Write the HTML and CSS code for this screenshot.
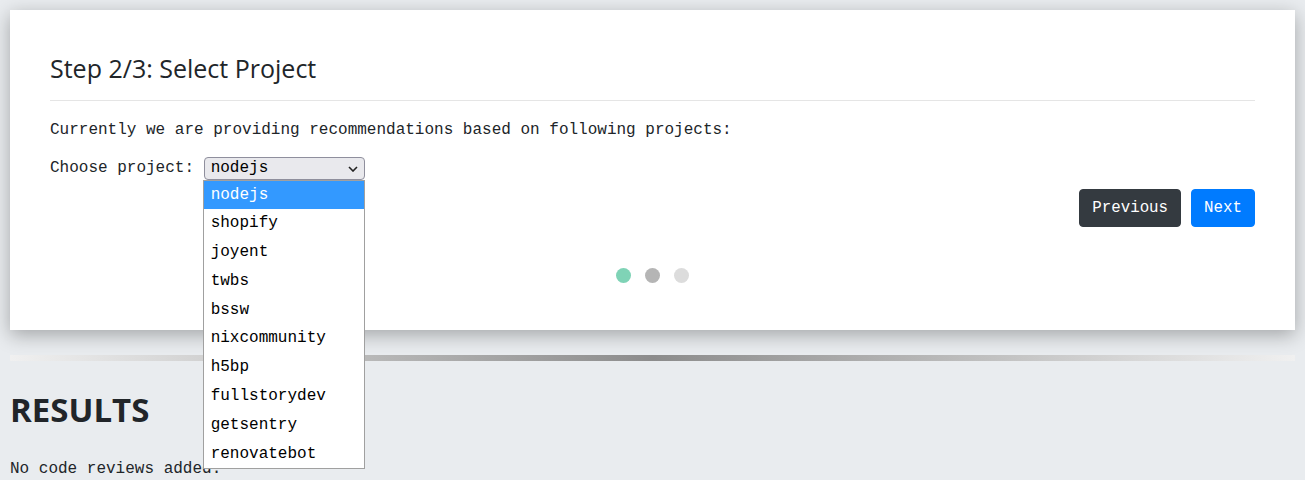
FILE: index.html
```html
<!DOCTYPE html>
<html>
<head>
<meta charset="utf-8">
<title>Select Project</title>
<link rel="stylesheet" href="styles.css">
</head>
<body>
<div class="card">
  <h4 class="card-title">Step 2/3: Select Project</h4>
  <hr class="divider">
  <p class="intro">Currently we are providing recommendations based on following projects:</p>
  <div class="choose-row">
    <label class="choose-label" for="project">Choose project: </label>
    <span class="select-wrap">
      <select id="project" class="project-select">
        <option>nodejs</option>
      </select>
      <svg class="chevron" width="10" height="6" viewBox="0 0 10 6"><path d="M1 1 L5 5 L9 1" fill="none" stroke="#222" stroke-width="1.6"/></svg>
      <ul class="dropdown">
        <li class="active">nodejs</li>
        <li>shopify</li>
        <li>joyent</li>
        <li>twbs</li>
        <li>bssw</li>
        <li>nixcommunity</li>
        <li>h5bp</li>
        <li>fullstorydev</li>
        <li>getsentry</li>
        <li>renovatebot</li>
      </ul>
    </span>
  </div>
  <div class="actions">
    <button class="btn btn-dark">Previous</button>
    <button class="btn btn-primary">Next</button>
  </div>
  <div class="steps">
    <span class="dot dot-done"></span>
    <span class="dot dot-current"></span>
    <span class="dot dot-next"></span>
  </div>
</div>
<hr class="fade-rule">
<h2 class="results-title">RESULTS</h2>
<p class="results-empty">No code reviews added.</p>
</body>
</html>
```
FILE: styles.css
```css
html, body {
  margin: 0;
}
body {
  padding: 10px;
  background: #e9ecef;
  font-family: "Liberation Mono", "Courier New", monospace;
  font-size: 16px;
  line-height: 1.5;
  color: #212529;
}
.card {
  background: #fff;
  padding: 43px 40px 47px;
  box-shadow: 0 5px 18px rgba(0, 0, 0, 0.3);
}
.card-title {
  margin: 0;
  font-family: "Open Sans", "Noto Sans", sans-serif;
  font-weight: 400;
  font-size: 25px;
  line-height: 1.2;
  color: #212529;
}
.divider {
  margin: 17px 0 17px;
  border: 0;
  border-top: 1px solid rgba(0, 0, 0, 0.1);
}
.intro {
  margin: 0 0 14px;
}
.choose-row {
  display: flex;
  align-items: center;
  height: 24px;
}
.choose-label {
  white-space: pre;
}
.select-wrap {
  position: relative;
  display: inline-block;
}
.project-select {
  appearance: none;
  -webkit-appearance: none;
  width: 161px;
  height: 23px;
  padding: 0 6px;
  margin: 0;
  font-family: "Liberation Mono", "Courier New", monospace;
  font-size: 16px;
  color: #000;
  background: #e9e9ed;
  border: 1px solid #8f8f9d;
  border-radius: 4px;
  display: block;
}
.chevron {
  position: absolute;
  right: 7px;
  top: 9px;
}
.dropdown {
  position: absolute;
  left: -1px;
  top: 23px;
  width: 160px;
  margin: 0;
  padding: 0;
  list-style: none;
  background: #fff;
  border: 1px solid #a0a0a0;
  z-index: 5;
}
.dropdown li {
  height: 28.8px;
  line-height: 28.8px;
  padding-left: 7px;
  color: #000;
}
.dropdown li.active {
  background: #3399ff;
  color: #fff;
}
.actions {
  display: flex;
  justify-content: flex-end;
  gap: 10px;
  margin-top: 9px;
}
.btn {
  font-family: "Liberation Mono", "Courier New", monospace;
  font-size: 15.8px;
  line-height: 24px;
  padding: 6px 12px;
  border: 1px solid transparent;
  border-radius: 4px;
  color: #fff;
}
.btn-dark {
  background: #343a40;
  border-color: #343a40;
}
.btn-primary {
  background: #007bff;
  border-color: #007bff;
}
.steps {
  display: flex;
  justify-content: center;
  gap: 14px;
  margin-top: 41px;
}
.dot {
  width: 15px;
  height: 15px;
  border-radius: 50%;
}
.dot-done { background: #7fd3b6; }
.dot-current { background: #b5b5b5; }
.dot-next { background: #dcdcdc; }
.fade-rule {
  margin: 25px 0 0;
  height: 6px;
  border: 0;
  background: linear-gradient(to right, #f0f0f0, #8c8c8c, #f0f0f0);
}
.results-title {
  margin: 29px 0 0;
  font-family: "Open Sans", "Noto Sans", sans-serif;
  font-weight: 700;
  font-size: 33px;
  line-height: 1.2;
  color: #212529;
}
.results-empty {
  margin: 27px 0 0;
}
```
